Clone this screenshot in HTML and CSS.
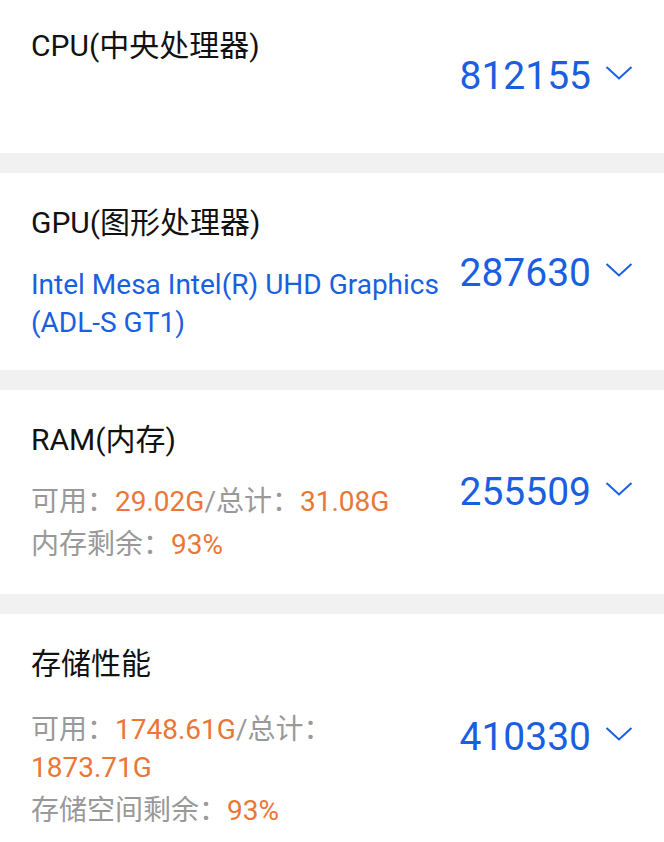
FILE: index.html
```html
<!DOCTYPE html>
<html lang="zh">
<head>
<meta charset="utf-8">
<link rel="stylesheet" href="styles.css">
</head>
<body>
<div class="list">
  <div class="card card-first">
    <div class="info">
      <div class="title">CPU(中央处理器)</div>
    </div>
    <div class="score">
      <span class="num">812155</span>
      <svg class="chev" viewBox="0 0 28 16" width="28" height="16"><polyline points="1.5,2 14,13.5 26.5,2" fill="none" stroke="#1a5fe0" stroke-width="2"/></svg>
    </div>
  </div>
  <div class="card">
    <div class="info">
      <div class="title">GPU(图形处理器)</div>
      <p class="sub blue">Intel Mesa Intel(R) UHD Graphics (ADL-S GT1)</p>
    </div>
    <div class="score">
      <span class="num">287630</span>
      <svg class="chev" viewBox="0 0 28 16" width="28" height="16"><polyline points="1.5,2 14,13.5 26.5,2" fill="none" stroke="#1a5fe0" stroke-width="2"/></svg>
    </div>
  </div>
  <div class="card card-ram">
    <div class="info">
      <div class="title">RAM(内存)</div>
      <p class="sub">可用：<span class="hl">29.02G</span>/总计：<span class="hl">31.08G</span></p>
      <p class="sub">内存剩余：<span class="hl">93%</span></p>
    </div>
    <div class="score">
      <span class="num">255509</span>
      <svg class="chev" viewBox="0 0 28 16" width="28" height="16"><polyline points="1.5,2 14,13.5 26.5,2" fill="none" stroke="#1a5fe0" stroke-width="2"/></svg>
    </div>
  </div>
  <div class="card card-last">
    <div class="info">
      <div class="title">存储性能</div>
      <p class="sub">可用：<span class="hl">1748.61G</span>/总计：<span class="hl">1873.71G</span></p>
      <p class="sub">存储空间剩余：<span class="hl">93%</span></p>
    </div>
    <div class="score">
      <span class="num">410330</span>
      <svg class="chev" viewBox="0 0 28 16" width="28" height="16"><polyline points="1.5,2 14,13.5 26.5,2" fill="none" stroke="#1a5fe0" stroke-width="2"/></svg>
    </div>
  </div>
</div>
</body>
</html>
```
FILE: styles.css
```css
html, body {
  margin: 0;
  padding: 0;
  background: #f1f1f1;
}
body {
  font-family: Roboto, "Noto Sans CJK SC", sans-serif;
  color: #111;
}
.list {
  display: flex;
  flex-direction: column;
  gap: 20px;
}
.card {
  background: #fff;
  display: flex;
  align-items: center;
  justify-content: space-between;
  padding: 30px 31px 28px 31px;
}
.card-first {
  box-sizing: border-box;
  height: 153px;
  padding-top: 26px;
  padding-bottom: 0;
  align-items: flex-start;
}
.card-first .score {
  margin-top: 27px;
}
.card-ram {
  padding-bottom: 30px;
}
.card-last .title + .sub {
  margin-top: 27px;
}
.info {
  width: 412px;
}
.title {
  font-size: 30px;
  line-height: 40px;
}
.sub {
  margin: 0;
  font-size: 28px;
  line-height: 38px;
  color: #999;
}
.title + .sub {
  margin-top: 23px;
}
.sub + .sub {
  margin-top: 5px;
}
.sub.blue {
  color: #1a5fe0;
}
.hl {
  color: #eb7636;
}
.score {
  display: flex;
  align-items: center;
  gap: 14px;
}
.num {
  font-size: 39px;
  line-height: 46px;
  color: #1a5fe0;
}
.chev {
  display: block;
  margin-top: -6px;
}
```
